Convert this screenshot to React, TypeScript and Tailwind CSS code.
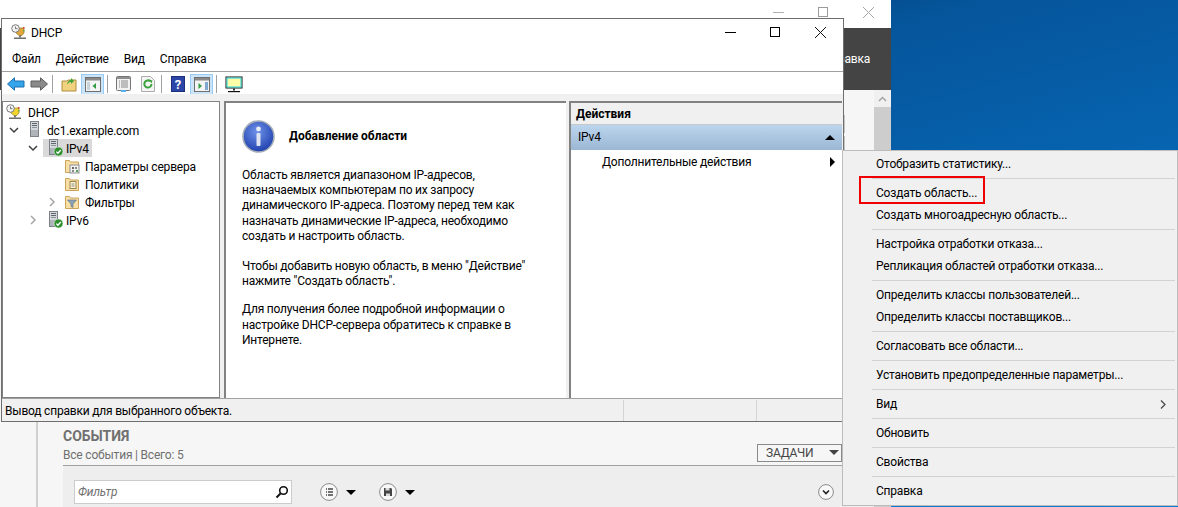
import React from 'react';

// Server icon used in the tree, optional green status badge
const ServerIcon = ({ badge = false }: { badge?: boolean }) => (
  <svg width="18" height="18" viewBox="0 0 18 18" className="shrink-0">
    <rect x="2.5" y="0.5" width="8" height="15" fill="#d4d8dc" stroke="#7c8288" />
    <rect x="4" y="2" width="5" height="1" fill="#5f666c" />
    <rect x="4" y="4" width="5" height="1" fill="#5f666c" />
    <rect x="4" y="6" width="5" height="1" fill="#8d949a" />
    <rect x="3" y="9" width="7" height="6" fill="#aeb4b9" />
    {badge && (
      <>
        <circle cx="11.5" cy="12.5" r="4.5" fill="#2f8f2f" stroke="#e8f5e8" strokeWidth="0.6" />
        <path d="M9.3 12.6l1.6 1.6 2.9-3.2" fill="none" stroke="#fff" strokeWidth="1.3" />
      </>
    )}
  </svg>
);

const TrophyIcon = ({ color }: { color: string }) => (
  <svg width="16" height="16" viewBox="0 0 16 16" className="shrink-0">
    <path d="M5 4h8v5l-2 2.5H8L5 9z" fill={color} stroke="#8a6a1f" strokeWidth="0.6" />
    <circle cx="4.5" cy="4.5" r="3.8" fill="#f4f4f4" stroke="#7a7a7a" />
    <path d="M4.5 2.5v2.2h2" fill="none" stroke="#555" strokeWidth="0.8" />
    <rect x="8" y="11.5" width="2" height="2" fill="#777" />
    <rect x="3" y="13.5" width="12" height="1.5" fill="#6d6d6d" />
    <rect x="12" y="3" width="1.5" height="1.5" fill="#d23b2a" />
    <rect x="12" y="6" width="1.5" height="1.5" fill="#6aa84f" />
  </svg>
);

const FolderIcon = ({ kind }: { kind: 'params' | 'policy' | 'filter' }) => (
  <svg width="16" height="16" viewBox="0 0 16 16" className="shrink-0">
    <path d="M1.5 2.5h4l1 1.5h8v10.5h-13z" fill="#f8dfa6" stroke="#c9a45a" />
    {kind === 'params' && (
      <>
        <rect x="6" y="7" width="9" height="8" fill="#f3f3f3" stroke="#8d8d8d" />
        <rect x="8" y="9" width="2" height="2" fill="#666" />
        <rect x="11" y="9" width="2" height="2" fill="#888" />
        <rect x="8" y="12" width="2" height="2" fill="#888" />
        <rect x="12" y="12" width="2" height="2" fill="#52a552" />
      </>
    )}
    {kind === 'policy' && (
      <>
        <rect x="6" y="5.5" width="6" height="7" fill="#fff4d6" stroke="#9c8650" />
        <path d="M7.5 8h3M7.5 10h3" stroke="#8c8c8c" />
      </>
    )}
    {kind === 'filter' && <path d="M3.5 6h9l-3.5 4v3.5l-2-1V10z" fill="#8ba3b5" stroke="#5d7180" strokeWidth="0.6" />}
  </svg>
);

const TreeChevron = ({ open, dark }: { open: boolean; dark: boolean }) => (
  <svg width="10" height="10" viewBox="0 0 10 10" className="shrink-0">
    <path
      d={open ? 'M1 3l4 4 4-4' : 'M3 1l4 4-4 4'}
      fill="none"
      stroke={dark ? '#404040' : '#a6a6a6'}
      strokeWidth="1.5"
    />
  </svg>
);

const treeRows = [
  { label: 'DHCP', pad: 'pl-[2px]', gap: 'ml-[6px]', icon: <TrophyIcon color="#f0d52c" /> },
  { label: 'dc1.example.com', pad: 'pl-[6px]', arrowGap: 'mr-[8px]', gap: 'ml-px', chevron: 'open', icon: <ServerIcon /> },
  { label: 'IPv4', pad: 'pl-[25px]', arrowGap: 'mr-[5px]', gap: 'ml-px', chevron: 'open', icon: <ServerIcon badge />, selected: true },
  { label: 'Параметры сервера', pad: 'pl-[60px]', gap: 'ml-[5px]', icon: <FolderIcon kind="params" /> },
  { label: 'Политики', pad: 'pl-[60px]', gap: 'ml-[5px]', icon: <FolderIcon kind="policy" /> },
  { label: 'Фильтры', pad: 'pl-[44px]', arrowGap: 'mr-[6px]', gap: 'ml-[5px]', chevron: 'closed', icon: <FolderIcon kind="filter" /> },
  { label: 'IPv6', pad: 'pl-[25px]', arrowGap: 'mr-[8px]', gap: 'ml-px', chevron: 'closed', icon: <ServerIcon badge /> },
];

const menuGroups = [
  ['Отобразить статистику...'],
  ['Создать область...', 'Создать многоадресную область...'],
  ['Настройка отработки отказа...', 'Репликация областей отработки отказа...'],
  ['Определить классы пользователей...', 'Определить классы поставщиков...'],
  ['Согласовать все области...'],
  ['Установить предопределенные параметры...'],
  ['Вид'],
  ['Обновить'],
  ['Свойства'],
  ['Справка'],
];

const ToolSep = () => <div className="w-px h-[18px] bg-[#a0a0a0] mx-[3px]" />;

const Toolbar = () => (
  <div className="h-[23px] flex items-center border-t border-[#a0a0a0] pl-[5px] pt-[2px] bg-white">
    <svg width="18" height="14" viewBox="0 0 18 14">
      <path d="M0.5 7L7.5 0.8V4h9.5v6H7.5v3.2z" fill="#35a4ea" stroke="#1d6fb0" />
    </svg>
    <svg width="18" height="14" viewBox="0 0 18 14" className="ml-[5px]">
      <path d="M17.5 7L10.5 0.8V4H1v6h9.5v3.2z" fill="#8a8a8a" stroke="#5e5e5e" />
    </svg>
    <div className="ml-[1px]"><ToolSep /></div>
    <svg width="16" height="16" viewBox="0 0 16 16" className="ml-[5px]">
      <path d="M1 5h5l1-1h8v11H1z" fill="#f1d27e" stroke="#b08c3f" />
      <path d="M6 9c0-3 2-5 4-5V2l3 3-3 3V6c-2 0-3 1-4 3z" fill="#3da33d" />
    </svg>
    <div className="ml-[4px] w-[23px] h-[21px] bg-[#cce4f7] border border-[#99ccf4] flex items-center justify-center">
      <svg width="16" height="15" viewBox="0 0 16 15">
        <rect x="0.5" y="0.5" width="15" height="14" fill="#f4f4f4" stroke="#6f6f6f" />
        <rect x="1" y="1" width="14" height="2.5" fill="#8a8a8a" />
        <rect x="2" y="5" width="3" height="8" fill="#c9d3da" />
        <path d="M11 6v6L7.5 9z" fill="#2f9e44" />
      </svg>
    </div>
    <ToolSep />
    <svg width="15" height="16" viewBox="0 0 15 16" className="ml-[5px]">
      <rect x="0.5" y="0.5" width="14" height="14" rx="1" fill="#f2f2f2" stroke="#767676" />
      <rect x="1" y="1" width="13" height="2" fill="#8f8f8f" />
      <path d="M3 5h1M5 5h7M3 7h1M5 7h7M3 9h1M5 9h7M3 11h1M5 11h7" stroke="#8a8a8a" />
      <rect x="5" y="14" width="5" height="2" fill="#55b0ee" />
    </svg>
    <svg width="14" height="16" viewBox="0 0 14 16" className="ml-[10px]">
      <path d="M0.5 0.5h9l4 4v11H0.5z" fill="#f5f5f5" stroke="#adadad" />
      <path d="M10.5 8a3.6 3.6 0 1 1-1.2-2.7" fill="none" stroke="#3da33d" strokeWidth="2" />
      <path d="M8 3.5l3.5 1-1 3z" fill="#3da33d" />
    </svg>
    <div className="ml-[3px]"><ToolSep /></div>
    <div className="ml-[6px] w-[14px] h-[16px] bg-[#2b46a6] border border-[#1d2f78] flex items-center justify-center text-white text-[13px] font-bold leading-none">?</div>
    <div className="ml-[5px] w-[23px] h-[21px] bg-[#cce4f7] border border-[#99ccf4] flex items-center justify-center">
      <svg width="16" height="15" viewBox="0 0 16 15">
        <rect x="0.5" y="0.5" width="15" height="14" fill="#f4f4f4" stroke="#6f6f6f" />
        <rect x="1" y="1" width="14" height="2.5" fill="#8a8a8a" />
        <rect x="11" y="5" width="3" height="8" fill="#7fa8d0" />
        <path d="M4.5 6v6L8 9z" fill="#2f9e44" />
      </svg>
    </div>
    <ToolSep />
    <svg width="18" height="17" viewBox="0 0 18 17" className="ml-[5px]">
      <rect x="1" y="1" width="16" height="11" fill="#fdfda8" stroke="#111" />
      <rect x="2" y="2" width="14" height="9" fill="none" stroke="#23d0ea" />
      <rect x="8" y="12.5" width="2" height="2" fill="#333" />
      <rect x="3" y="15" width="12" height="1.2" fill="#111" />
    </svg>
  </div>
);

const Tree = () => (
  <div className="w-[218px] h-full bg-white border border-[#828282] pt-[1px]">
    {treeRows.map((row) => (
      <div key={row.label} className={`h-[18px] flex items-center ${row.pad}`}>
        {row.chevron && (
          <span className={row.arrowGap}>
            <TreeChevron open={row.chevron === 'open'} dark={row.chevron === 'open'} />
          </span>
        )}
        <div className={`flex items-center h-[18px] ${row.selected ? 'bg-[#d9d9d9] pr-[3px] pl-[4px]' : 'pl-[1px]'}`}>
          {row.icon}
          <span className={`${row.gap} whitespace-nowrap pt-[1px]`}>{row.label}</span>
        </div>
      </div>
    ))}
  </div>
);

const CenterPane = () => (
  <div className="ml-[4px] w-[342px] h-full bg-white border-2 border-[#828282] border-b-0 border-r-0 pl-[16px]">
    <div className="flex items-center h-[33px] mt-[17px]">
      <svg width="33" height="33" viewBox="0 0 33 33" className="shrink-0">
        <defs>
          <radialGradient id="ball" cx="45%" cy="35%" r="70%">
            <stop offset="0%" stopColor="#6f93ea" />
            <stop offset="100%" stopColor="#1a3aa8" />
          </radialGradient>
        </defs>
        <circle cx="16.5" cy="16.5" r="15.5" fill="url(#ball)" stroke="#a6adb8" strokeWidth="1.6" />
        <circle cx="16.5" cy="9" r="2.4" fill="#e8eef8" />
        <rect x="14.5" y="13" width="4" height="13" rx="1" fill="#dfe6f2" />
      </svg>
      <span className="ml-[14px] mb-[2px] font-bold tracking-normal">Добавление области</span>
    </div>
    <div className="mt-[15px] w-[320px] leading-[15.2px] whitespace-nowrap">
      <p>Область является диапазоном IP-адресов,<br />назначаемых компьютерам по их запросу<br />динамического IP-адреса. Поэтому перед тем как<br />назначать динамические IP-адреса, необходимо<br />создать и настроить область.</p>
      <p className="mt-[15px]">Чтобы добавить новую область, в меню "Действие"<br />нажмите "Создать область".</p>
      <p className="mt-[13px]">Для получения более подробной информации о<br />настройке DHCP-сервера обратитесь к справке в<br />Интернете.</p>
    </div>
  </div>
);

const ActionsPane = () => (
  <div className="ml-[3px] flex-1 h-full bg-white border-l-2 border-t-2 border-[#828282] mr-[1px]">
    <div className="h-[21px] bg-[#f0f0f0] flex items-center pl-[5px] pt-[1px] font-bold tracking-normal">Действия</div>
    <div className="h-[26px] flex items-center justify-between pl-[7px] pr-[7px] pb-[1px] bg-gradient-to-b from-[#bcd5ee] to-[#9bb7d4] border-t border-[#c8c8c8]">
      <span>IPv4</span>
      <div className="w-0 h-0 border-x-[5px] border-x-transparent border-b-[5px] border-b-black" />
    </div>
    <div className="h-[24px] flex items-center justify-between pl-[31px] pr-[7px]">
      <span>Дополнительные действия</span>
      <div className="w-0 h-0 border-y-[5px] border-y-transparent border-l-[5px] border-l-black" />
    </div>
  </div>
);

const DhcpWindow = () => (
  <div className="absolute left-[1px] top-[18px] w-[843px] h-[404px] bg-white border border-[#6e6e6e] flex flex-col text-[12px] text-black">
    <div className="h-[26px] flex items-center pl-[9px]">
      <TrophyIcon color="#e0a63c" />
      <span className="ml-[4px] pt-[2px]">DHCP</span>
      <div className="ml-auto flex items-center">
        <div className="w-[11px] h-px bg-black mr-[34px]" />
        <div className="w-[10px] h-[10px] border border-black mr-[35px]" />
        <svg width="11" height="11" viewBox="0 0 11 11" className="mr-[17px]">
          <path d="M0 0l11 11M11 0L0 11" stroke="#111" />
        </svg>
      </div>
    </div>
    <div className="h-[26px] flex items-center pl-[10px] pt-[2px] gap-[15px]">
      <span>Файл</span>
      <span>Действие</span>
      <span>Вид</span>
      <span>Справка</span>
    </div>
    <Toolbar />
    <div className="h-[7px] bg-[#f0f0f0]" />
    <div className="h-[297px] flex bg-[#f0f0f0]">
      <Tree />
      <CenterPane />
      <ActionsPane />
    </div>
    <div className="flex-1 flex items-center bg-[#f0f0f0] border-t border-[#a0a0a0] pl-[3px]">
      <span className="w-[618px] pt-[2px]">Вывод справки для выбранного объекта.</span>
      <div className="w-px h-[21px] bg-[#d4d4d4]" />
      <div className="w-[132px]" />
      <div className="w-px h-[21px] bg-[#d4d4d4]" />
    </div>
  </div>
);

const ContextMenu = () => (
  <div className="absolute left-[842px] top-[150px] w-[336px] h-[356px] bg-[#f0f0f0] border border-[#bdbdbd] py-[2px] text-[12px] text-black">
    {menuGroups.map((group, i) => (
      <div key={group[0]}>
        {i > 0 && <div className="h-[7px] flex items-center pl-[29px] pr-[2px]"><div className="h-px w-full bg-[#d2d2d2]" /></div>}
        {group.map((item) => (
          <div key={item} className="h-[22px] flex items-center pl-[33px] pr-[11px] justify-between">
            <span>{item}</span>
            {item === 'Вид' && (
              <svg width="6" height="9" viewBox="0 0 6 9"><path d="M1 0.5l4 4-4 4" fill="none" stroke="#444" strokeWidth="1.2" /></svg>
            )}
          </div>
        ))}
      </div>
    ))}
    {/* annotation frame from the original article */}
    <div className="absolute left-[16px] top-[25px] w-[126px] h-[28px] border-2 border-[#f00000]" />
  </div>
);

const ServerManager = () => (
  <div className="absolute left-0 top-0 w-[891px] h-[507px] flex flex-col bg-[#f6f6f6] text-[12px]">
    <div className="h-[28px] bg-white flex items-start justify-end pt-[6px]">
      <div className="w-[11px] h-px bg-[#b0b0b0] mr-[34px] mt-[6px]" />
      <div className="w-[10px] h-[10px] border border-[#9a9a9a] mr-[35px] mt-px" />
      <svg width="11" height="11" viewBox="0 0 11 11" className="mr-[17px] mt-px">
        <path d="M0 0l11 11M11 0L0 11" stroke="#a8a8a8" />
      </svg>
    </div>
    <div className="h-[62px] bg-[#444444] text-white flex items-center justify-end pr-[21px]">Справка</div>
    <div className="flex-1 flex min-h-0">
      <div className="w-[38px] border-r-2 border-[#d0d0d0]" />
      <div className="relative flex-1 pl-[25px] pt-[336px] flex flex-col min-w-0">
        {/* edges of tiles that stick out from under the DHCP window */}
        <div className="absolute left-[803px] top-[25px] w-[4px] h-[18px] border border-[#c4c4c4]" />
        <div className="absolute left-[803px] top-[46px] w-[4px] h-[18px] border border-[#c4c4c4]" />
        <div className="h-[20px] flex items-center text-[#707070] text-[14px] font-bold tracking-normal">СОБЫТИЯ</div>
        <div className="h-[17px] flex items-center justify-between text-[#707070]">
          <span>Все события | Всего: 5</span>
          <div className="w-[85px] h-[18px] border border-[#8a8a8a] flex items-center pl-[8px] mt-[-4px] mr-[32px] text-[#444]">
            ЗАДАЧИ
            <div className="ml-auto mr-[2px] w-0 h-0 border-x-[5px] border-x-transparent border-t-[5px] border-t-[#444]" />
          </div>
        </div>
        <div className="flex-1 bg-[#eeeeee] border-t border-[#a0a0a0] mt-[2px] pl-[11px] pt-[14px] flex items-start">
          <div className="w-[218px] h-[24px] bg-white border border-[#cccccc] flex items-center justify-between pl-[3px] pr-[2px] italic text-[#707070]">
            Фильтр
            <svg width="14" height="14" viewBox="0 0 14 14"><circle cx="8.5" cy="5.5" r="3.8" fill="none" stroke="#111" strokeWidth="1.6" /><path d="M5.5 8.5L1.5 12.5" stroke="#111" strokeWidth="2" /></svg>
          </div>
          <div className="ml-[28px] mt-[3px] flex items-center">
            <svg width="18" height="18" viewBox="0 0 18 18"><circle cx="9" cy="9" r="8.4" fill="#f8f8f8" stroke="#8a8a8a" /><path d="M6 6h1M8 6h5M6 9h1M8 9h5M6 12h1M8 12h5" stroke="#444" strokeWidth="1.4" /></svg>
            <div className="ml-[8px] w-0 h-0 border-x-[5px] border-x-transparent border-t-[5px] border-t-black" />
          </div>
          <div className="ml-[23px] mt-[3px] flex items-center">
            <svg width="18" height="18" viewBox="0 0 18 18"><circle cx="9" cy="9" r="8.4" fill="#f8f8f8" stroke="#8a8a8a" /><path d="M5 5h7l1 1v7H5z" fill="#444" /><rect x="6.5" y="5" width="4" height="2.5" fill="#d8d8d8" /><rect x="7" y="10.5" width="4" height="2.5" fill="#d8d8d8" /></svg>
            <div className="ml-[8px] w-0 h-0 border-x-[5px] border-x-transparent border-t-[5px] border-t-black" />
          </div>
          <svg width="16" height="16" viewBox="0 0 16 16" className="ml-[403px] mt-[4px]"><circle cx="8" cy="8" r="7.4" fill="#f8f8f8" stroke="#8a8a8a" /><path d="M5 6.5l3 3 3-3" fill="none" stroke="#222" strokeWidth="1.6" /></svg>
        </div>
      </div>
      <div className="w-[17px] bg-[#f0f0f0] flex flex-col">
        <div className="h-[17px] flex items-center justify-center">
          <svg width="9" height="6" viewBox="0 0 9 6"><path d="M1 5l3.5-3.5L8 5" fill="none" stroke="#a0a0a0" strokeWidth="1.4" /></svg>
        </div>
        <div className="flex-1 bg-[#cdcdcd]" />
      </div>
    </div>
  </div>
);

const App: React.FC = () => {
  return (
    <div className="relative w-[1178px] h-[507px] overflow-hidden font-['Roboto',sans-serif] tracking-[-0.2px] bg-[linear-gradient(165deg,#02234a_0%,#03366a_15%,#05559b_32%,#0a7fd6_100%)]">
      <ServerManager />
      <DhcpWindow />
      <ContextMenu />
    </div>
  );
};

export default App;
